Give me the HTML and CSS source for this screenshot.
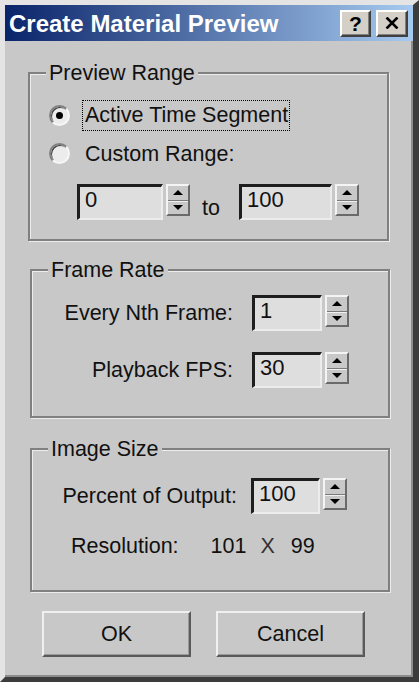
FILE: index.html
```html
<!DOCTYPE html>
<html>
<head>
<meta charset="utf-8">
<title>Create Material Preview</title>
<link rel="stylesheet" href="styles.css">
</head>
<body>
<div class="window">
  <div class="titlebar">
    <span class="title">Create Material Preview</span>
    <div class="tb-buttons">
      <span class="tb-btn help">?</span>
      <span class="tb-btn close">
        <svg width="14" height="12" viewBox="0 0 14 12"><path d="M1.5 0.5 L12.5 11.5 M12.5 0.5 L1.5 11.5" stroke="#000" stroke-width="2.6" fill="none"/></svg>
      </span>
    </div>
  </div>

  <div class="content">
    <div class="group g1">
      <div class="group-title">Preview Range</div>
      <div class="radio-row r1">
        <span class="radio"><span class="dot"></span></span>
        <span class="focus">Active Time Segment</span>
      </div>
      <div class="radio-row r2">
        <span class="radio"></span>
        <span class="lbl">Custom Range:</span>
      </div>
      <div class="range-row">
        <div class="spinner">
          <div class="edit w86">0</div>
          <div class="spin"><div class="spin-half"><span class="up"></span></div><div class="spin-half"><span class="down"></span></div></div>
        </div>
        <span class="to">to</span>
        <div class="spinner">
          <div class="edit w93">100</div>
          <div class="spin"><div class="spin-half"><span class="up"></span></div><div class="spin-half"><span class="down"></span></div></div>
        </div>
      </div>
    </div>

    <div class="group g2">
      <div class="group-title">Frame Rate</div>
      <div class="field-row row1">
        <span class="field-label">Every Nth Frame:</span>
        <div class="spinner">
          <div class="edit w70">1</div>
          <div class="spin"><div class="spin-half"><span class="up"></span></div><div class="spin-half"><span class="down"></span></div></div>
        </div>
      </div>
      <div class="field-row row2">
        <span class="field-label">Playback FPS:</span>
        <div class="spinner">
          <div class="edit w70">30</div>
          <div class="spin"><div class="spin-half"><span class="up"></span></div><div class="spin-half"><span class="down"></span></div></div>
        </div>
      </div>
    </div>

    <div class="group g3">
      <div class="group-title">Image Size</div>
      <div class="field-row row1">
        <span class="field-label">Percent of Output:</span>
        <div class="spinner">
          <div class="edit w69">100</div>
          <div class="spin"><div class="spin-half"><span class="up"></span></div><div class="spin-half"><span class="down"></span></div></div>
        </div>
      </div>
      <div class="res-row">
        <span class="res-label">Resolution:</span>
        <span class="res-w">101</span>
        <span class="res-x">X</span>
        <span class="res-h">99</span>
      </div>
    </div>

    <div class="buttons">
      <div class="btn">OK</div>
      <div class="btn">Cancel</div>
    </div>
  </div>
</div>
</body>
</html>
```

FILE: styles.css
```css
* { box-sizing: border-box; }
html, body { margin: 0; padding: 0; }
body {
  width: 419px;
  height: 682px;
  overflow: hidden;
  background: #c8c8c8;
  font-family: "Liberation Sans", Arial, sans-serif;
  font-size: 21.5px;
  color: #111;
}

.window {
  width: 419px;
  height: 682px;
  border-style: solid;
  border-width: 5px 6px 5px 5px;
  border-color: #e4e4e4 #3c3c3c #3c3c3c #e4e4e4;
  background: #c8c8c8;
  box-shadow: inset -2px -2px 0 #8c8c8c;
  display: flex;
  flex-direction: column;
}

/* title bar */
.titlebar {
  flex: none;
  height: 36px;
  display: flex;
  align-items: center;
  justify-content: space-between;
  padding: 0 5px 0 4px;
  background: linear-gradient(to right, #0a246a, #a6caf0);
}
.title {
  color: #fff;
  font-weight: bold;
  font-size: 24px;
  line-height: 26px;
  padding-top: 1px;
}
.tb-buttons { display: flex; gap: 5px; }
.tb-btn {
  width: 31px;
  height: 27px;
  display: flex;
  align-items: center;
  justify-content: center;
  background: #d4d0c8;
  border: 2px solid;
  border-color: #fff #404040 #404040 #fff;
  box-shadow: inset -1px -1px 0 #808080;
  font-weight: bold;
  font-size: 21px;
  color: #000;
  line-height: 1;
}
.tb-btn.close { width: 32px; }

/* content */
.content {
  flex: 1;
  display: flex;
  flex-direction: column;
}

.group {
  flex: none;
  display: flex;
  flex-direction: column;
  border: 2px solid #808080;
  box-shadow: inset 1px 1px 0 #ececec, 1px 1px 0 #ececec;
}
.group-title {
  align-self: flex-start;
  margin: -13px 0 0 16px;
  padding: 0 3px;
  background: #c8c8c8;
  line-height: 24px;
}
.g1 { margin: 31px 0 0 23px; width: 361px; height: 169px; }
.g2 { margin: 28px 0 0 25px; width: 360px; height: 149px; }
.g3 { margin: 30px 0 0 25px; width: 360px; height: 144px; }

/* radios */
.radio-row {
  display: flex;
  align-items: center;
  height: 31px;
  padding-left: 19px;
}
.r1 { margin-top: 15px; }
.r2 { margin-top: 7px; }
.radio {
  flex: none;
  width: 21px;
  height: 21px;
  margin-right: 12px;
  border-radius: 50%;
  border: 2px solid;
  border-color: #808080 #f6f6f6 #f6f6f6 #808080;
  background: #ececec;
  box-shadow: inset 1px 1px 0 #404040;
  display: flex;
  align-items: center;
  justify-content: center;
}
.dot {
  width: 7px;
  height: 7px;
  border-radius: 50%;
  background: #000;
}
.focus {
  height: 31px;
  line-height: 29px;
  padding: 0 1px 0 2px;
  border: 1px dotted #000;
}
.lbl { padding-left: 3px; line-height: 24px; }

/* spinners */
.spinner {
  flex: none;
  display: flex;
  align-items: flex-start;
}
.edit {
  height: 36px;
  border-style: solid;
  border-width: 3px 2px 2px 3px;
  border-color: #1e1e1e #ececec #ececec #1e1e1e;
  background: #dedede;
  padding-left: 5px;
  font-size: 22px;
  line-height: 26px;
  color: #111;
}
.w86 { width: 86px; }
.w93 { width: 93px; }
.w70 { width: 70px; }
.w69 { width: 69px; }
.spin {
  width: 24px;
  height: 32px;
  margin-left: 3px;
  display: flex;
  flex-direction: column;
  border: 2px solid;
  border-color: #f4f4f4 #6a6a6a #6a6a6a #f4f4f4;
  background: #c8c8c8;
}
.spin-half {
  flex: 1;
  display: flex;
  align-items: center;
  justify-content: center;
}
.spin-half + .spin-half {
  border-top: 1px solid #7a7a7a;
  box-shadow: inset 0 1px 0 #f0f0f0;
}
.up {
  width: 0;
  height: 0;
  border-left: 5px solid transparent;
  border-right: 5px solid transparent;
  border-bottom: 5px solid #000;
}
.down {
  width: 0;
  height: 0;
  border-left: 5px solid transparent;
  border-right: 5px solid transparent;
  border-top: 5px solid #000;
}

.range-row {
  display: flex;
  align-items: flex-start;
  margin-top: 15px;
  padding-left: 47px;
}
.to {
  margin: 12px 19px 0 12px;
  line-height: 24px;
}

/* label + field rows */
.field-row {
  display: flex;
  align-items: center;
}
.field-label {
  flex: none;
  text-align: right;
  line-height: 24px;
}
.g2 .field-label { width: 201px; margin-right: 19px; }
.g2 .row1 { margin-top: 13px; }
.g2 .row2 { margin-top: 21px; }
.g3 .field-label { width: 205px; margin-right: 14px; }
.g3 .row1 { margin-top: 17px; }

.res-row {
  display: flex;
  margin-top: 20px;
  padding-left: 39px;
  line-height: 24px;
}
.res-w { margin-left: 32px; }
.res-x { margin-left: 14px; color: #333; }
.res-h { margin-left: 16px; }

/* buttons */
.buttons {
  display: flex;
  gap: 25px;
  margin: 19px 0 0 37px;
}
.btn {
  width: 149px;
  height: 46px;
  display: flex;
  align-items: center;
  justify-content: center;
  border: 2px solid;
  border-color: #f0f0f0 #5a5a5a #5a5a5a #f0f0f0;
  box-shadow: inset -1px -1px 0 #9a9a9a;
}
```
